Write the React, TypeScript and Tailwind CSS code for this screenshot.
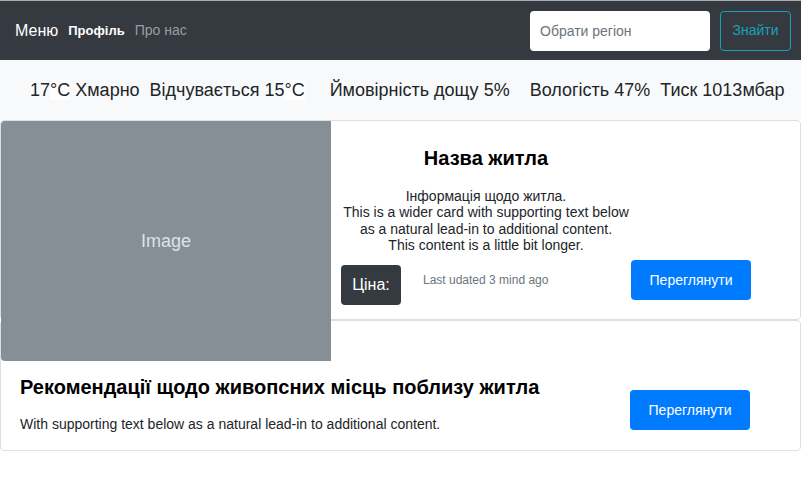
import React from 'react';

const font = { fontFamily: '"Liberation Sans", Arial, sans-serif' };

function Navbar() {
  return (
    <nav className="flex h-[60px] items-center justify-between border-t border-[#a9abad] bg-[#343a40] pl-[15px] pr-[10px]">
      <div className="flex items-center">
        <span className="text-[16px] text-white">Меню</span>
        <a className="ml-[10px] text-[13px] font-bold text-white">Профіль</a>
        <a className="ml-[10px] text-[14px] text-[#9a9da0]">Про нас</a>
      </div>
      <form className="flex items-center">
        <input
          className="h-[40px] w-[180px] rounded-[4px] bg-white px-[10px] text-[14px] text-[#495057] outline-none placeholder:text-[#6c757d]"
          placeholder="Обрати регіон"
        />
        <button
          type="button"
          className="ml-[10px] h-[40px] w-[71px] rounded-[4px] border border-[#17a2b8] text-[14px] text-[#17a2b8]"
        >
          Знайти
        </button>
      </form>
    </nav>
  );
}

function Weather() {
  return (
    <div className="flex h-[60px] items-center bg-[#f8f9fa] pl-[30px] text-[18px] text-[#212529]">
      <span>
        17<span className="bg-white">°C</span> Хмарно
      </span>
      <span className="ml-[10px]">
        Відчувається 15<span className="bg-white">°C</span>
      </span>
      <span className="ml-[25px]">Ймовірність дощу 5%</span>
      <span className="ml-[20px]">Вологість 47%</span>
      <span className="ml-[10px]">Тиск 1013мбар</span>
    </div>
  );
}

function MainCard() {
  return (
    <div className="flex h-[200px] rounded-[4px] border border-[#dfdfdf] bg-white">
      <div className="relative z-10 flex h-[240px] w-[330px] shrink-0 items-center justify-center rounded-l-[4px] bg-[#868e96] text-[18px] text-[#dee2e6]">
        Image
      </div>
      <div className="flex flex-1 flex-col pl-[10px]">
        <div className="w-[290px] pt-[25px] text-center">
          <h5 className="text-[20px] leading-[24px] font-bold text-black">Назва житла</h5>
          <p className="mt-[18px] text-[14px] leading-[16.3px] text-[#212529]">
            Інформація щодо житла.
            <br />
            This is a wider card with supporting text below
            <br />
            as a natural lead-in to additional content.
            <br />
            This content is a little bit longer.
          </p>
        </div>
        <div className="mt-[7px] flex items-start">
          <div className="flex w-[290px] items-start">
            <span className="mt-[5px] flex h-[40px] w-[60px] items-center justify-center rounded-[4px] bg-[#343a40] text-[16px] text-white">
              Ціна:
            </span>
            <small className="ml-[22px] mt-[11px] text-[12px] text-[#6c757d]">Last udated 3 mind ago</small>
          </div>
          <button
            type="button"
            className="h-[40px] w-[120px] rounded-[4px] bg-[#007bff] text-[14px] text-white"
          >
            Переглянути
          </button>
        </div>
      </div>
    </div>
  );
}

function NearbyCard() {
  return (
    <div className="flex h-[131px] rounded-[4px] border border-[#dfdfdf] bg-white">
      <div className="w-[629px] pl-[19px] pt-[54px]">
        <h5 className="text-[20px] leading-[24px] font-bold text-black">
          Рекомендації щодо живопсних місць поблизу житла
        </h5>
        <p className="mt-[17px] text-[14px] leading-[16px] text-[#212529]">
          With supporting text below as a natural lead-in to additional content.
        </p>
      </div>
      <div className="pt-[69px]">
        <button
          type="button"
          className="h-[40px] w-[120px] rounded-[4px] bg-[#007bff] text-[14px] text-white"
        >
          Переглянути
        </button>
      </div>
    </div>
  );
}

export default function App() {
  return (
    <div className="min-h-[481px] w-[801px] bg-white" style={font}>
      <Navbar />
      <Weather />
      <MainCard />
      <NearbyCard />
    </div>
  );
}
